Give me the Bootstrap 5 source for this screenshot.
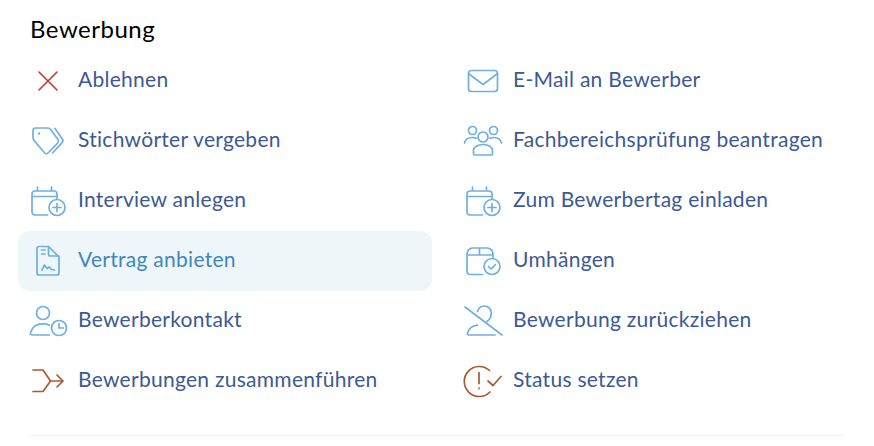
<!DOCTYPE html>
<html lang="de"><head><meta charset="utf-8">
<link href="https://cdn.jsdelivr.net/npm/bootstrap@5.3.0/dist/css/bootstrap.min.css" rel="stylesheet">
<style>
html,body{height:100%;overflow:hidden;background:#fff}
body{font-family:"Lato","Noto Sans",sans-serif}
.panel{padding:12px 30px 0 18px}
.ttl{font-size:24px;line-height:34px;height:38px;margin:0 0 1px 12px;font-weight:400;color:#000;letter-spacing:.5px}
.acts{display:grid;grid-template-columns:414px 1fr;column-gap:21px;grid-auto-rows:60px}
.act{color:#3b5a94;font-size:21px;border-radius:12px;text-decoration:none;letter-spacing:.28px}
.act.on{background:#eef6fa;color:#3f87bd}
.lbl{padding-bottom:5px}
.ic{width:60px;flex:0 0 60px;height:40px}
.ic svg{display:block;width:60px;height:40px;fill:none;stroke:#6fb0e2;stroke-width:1.7;stroke-linecap:round;stroke-linejoin:round}
.ic svg.r{stroke:#c0392b;stroke-width:1.6}
.ic svg.b{stroke:#a85a33}
.sep{height:1px;background:#eceef0;margin:24px 0 0 12px}
</style></head><body>
<div class="panel">
<h5 class="ttl">Bewerbung</h5>
<div class="acts">
<a class="act d-flex align-items-center" href="#"><span class="ic"><svg viewBox="0 0 60 40" class="r"><path d="M21 11l18 18M39 11L21 29"/></svg></span><span class="lbl">Ablehnen</span></a>
<a class="act d-flex align-items-center" href="#"><span class="ic"><svg viewBox="0 0 60 40"><rect x="15.500" y="9.500" width="29" height="21" rx="3"/><path d="M16 13l14 10.500L44 13"/></svg></span><span class="lbl">E-Mail an Bewerber</span></a>

<a class="act d-flex align-items-center" href="#"><span class="ic"><svg viewBox="0 0 60 40"><path d="M17.500 7H30c1.200 0 2 .5 2.700 1.400L40 18.500c.8 1.200.7 2.300-.2 3.300L30 32c-1 1-2.400 1-3.300 0L16.500 20c-1-1.200-1.500-2.200-1.500-3.500V9.500C15 8 16 7 17.500 7z"/><path d="M37 7.500l7.300 10.500c.9 1.300.8 2.500-.2 3.600L34.500 32"/><circle cx="21" cy="12.500" r=".5"/></svg></span><span class="lbl">Stichwörter vergeben</span></a>
<a class="act d-flex align-items-center" href="#"><span class="ic"><svg viewBox="0 0 60 40"><circle cx="30" cy="16" r="5"/><circle cx="19.500" cy="9.500" r="4"/><circle cx="40.500" cy="9.500" r="4"/><path d="M11.500 22c.8-3.500 3.800-5.500 8-5.500 1.300 0 2.500.2 3.500.6M48.500 22c-.8-3.500-3.800-5.500-8-5.500-1.300 0-2.500.2-3.500.6"/><path d="M20.500 33v-3.500c0-3.500 4-6 9.500-6s9.500 2.500 9.500 6V33c0 .6-.4 1-1 1h-17c-.6 0-1-.4-1-1z"/></svg></span><span class="lbl">Fachbereichsprüfung beantragen</span></a>

<a class="act d-flex align-items-center" href="#"><span class="ic"><svg viewBox="0 0 60 40"><path d="M29.500 34H17c-1.700 0-3-1.300-3-3V13c0-1.700 1.300-3 3-3h19c1.700 0 3 1.300 3 3v5M14 15.500h25M19.500 6v4M33.500 6v4"/><circle cx="39" cy="26.500" r="8"/><path d="M39 22.500v8M35 26.500h8"/></svg></span><span class="lbl">Interview anlegen</span></a>
<a class="act d-flex align-items-center" href="#"><span class="ic"><svg viewBox="0 0 60 40"><path d="M29.500 34H17c-1.700 0-3-1.300-3-3V13c0-1.700 1.300-3 3-3h19c1.700 0 3 1.300 3 3v5M14 15.500h25M19.500 6v4M33.500 6v4"/><circle cx="39" cy="26.500" r="8"/><path d="M39 22.500v8M35 26.500h8"/></svg></span><span class="lbl">Zum Bewerbertag einladen</span></a>

<a class="act on d-flex align-items-center" href="#"><span class="ic"><svg viewBox="0 0 60 40"><path d="M21 5.500h9.500l10.500 10.500v16c0 1.200-.8 2-2 2H21c-1.200 0-2-.8-2-2v-24.500c0-1.200.8-2 2-2z"/><path d="M30.500 5.500V13c0 1.200.8 2 2 2H41M23.500 9h3.500M23.500 13h3.500M24 29l2.500-5 2.500 3.500 2-1.500 2.500 2.500 3 .5"/></svg></span><span class="lbl">Vertrag anbieten</span></a>
<a class="act d-flex align-items-center" href="#"><span class="ic"><svg viewBox="0 0 60 40"><path d="M29.500 33.500H17c-1.700 0-3-1.300-3-3V13c0-3 2.500-6 5.500-6h15c3 0 5.500 3 5.500 6v4M14 14h26M26.500 7v7"/><circle cx="39" cy="25.500" r="8"/><path d="M35.500 25.500l2.500 2.500 4.500-4.500"/></svg></span><span class="lbl">Umhängen</span></a>

<a class="act d-flex align-items-center" href="#"><span class="ic"><svg viewBox="0 0 60 40"><circle cx="25" cy="12" r="6.500"/><path d="M31.500 34H14.500c-1.500 0-2.500-.8-2-2.200 1.300-5.500 6-9 12.500-9 2.500 0 4.500.4 6.500 1.400"/><circle cx="41" cy="27" r="7.500"/><path d="M41 22.500V27h4.500"/></svg></span><span class="lbl">Bewerberkontakt</span></a>
<a class="act d-flex align-items-center" href="#"><span class="ic"><svg viewBox="0 0 60 40"><path d="M12 6l37 28"/><path d="M24.500 10.500C25.500 7 28 5 31.500 5c4 0 6.800 3.300 6.800 7 0 3.500-1.300 6.500-4.300 8.500M15.500 34h26.500M15.500 34c-1 0-1.300-.8-1-2 1-3.800 4.500-7 10-7.800"/></svg></span><span class="lbl">Bewerbung zurückziehen</span></a>

<a class="act d-flex align-items-center" href="#"><span class="ic"><svg viewBox="0 0 60 40" class="b"><path d="M15 9h10l7.500 11L25 30.500H15M32.500 20H45M39 14l6 6-6 6"/></svg></span><span class="lbl">Bewerbungen zusammenführen</span></a>
<a class="act d-flex align-items-center" href="#"><span class="ic"><svg viewBox="0 0 60 40" class="b"><path d="M36.500 9.500A15 15 0 1 0 37 31M26 11.500v11M26 27v.5M35 20l5 4.500L48 15.500"/></svg></span><span class="lbl">Status setzen</span></a>
</div>
<div class="sep"></div>
</div>
</body></html>
